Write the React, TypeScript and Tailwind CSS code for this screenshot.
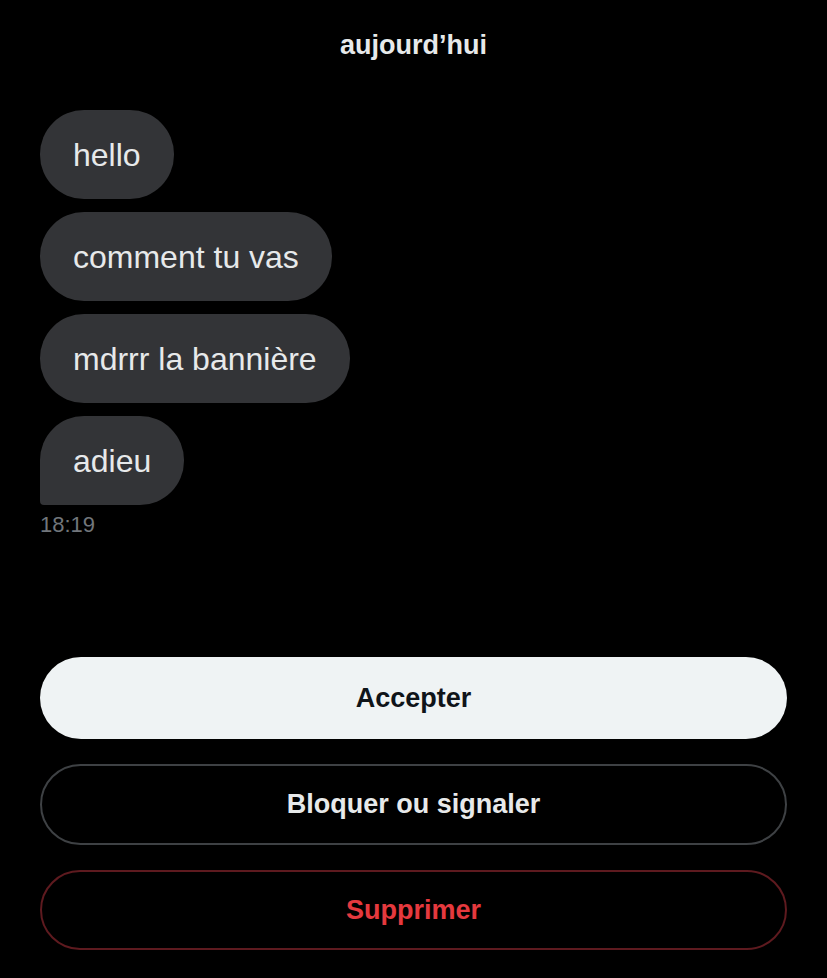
const messages = ["hello", "comment tu vas", "mdrrr la bannière", "adieu"];

export default function App() {
  return (
    <div className="flex h-[978px] w-full flex-col bg-black font-['Liberation_Sans',Arial,sans-serif]">
      <div className="flex h-[90px] items-center justify-center">
        <span className="text-[27px] font-bold text-[#e7e9ea]">aujourd’hui</span>
      </div>

      <div className="mt-[20px] flex flex-col items-start gap-[13px] px-10">
        {messages.map((m, i) => (
          <div
            key={m}
            className={
              i === messages.length - 1
                ? "flex h-[89px] items-center rounded-[44px] rounded-bl-[4px] bg-[#333437] px-[33px] text-[32px] text-[#e7e9ea]"
                : "flex h-[89px] items-center rounded-[44px] bg-[#333437] px-[33px] text-[32px] text-[#e7e9ea]"
            }
          >
            {m}
          </div>
        ))}
      </div>
      <div className="mt-[3px] px-10 text-[22px] text-[#71767b]">18:19</div>

      <div className="flex-1" />

      <div className="flex flex-col gap-[25px] px-10 pb-[28px]">
        <button className="flex h-[82px] items-center justify-center rounded-full bg-[#eff3f4] text-[27px] font-bold text-[#0f1419]">
          Accepter
        </button>
        <button className="flex h-[81px] items-center justify-center rounded-full border-2 border-[#3e4144] text-[27px] font-bold text-[#e7e9ea]">
          Bloquer ou signaler
        </button>
        <button className="flex h-[80px] items-center justify-center rounded-full border-2 border-[#5e1a1f] text-[27px] font-bold text-[#e5393e]">
          Supprimer
        </button>
      </div>
    </div>
  );
}
